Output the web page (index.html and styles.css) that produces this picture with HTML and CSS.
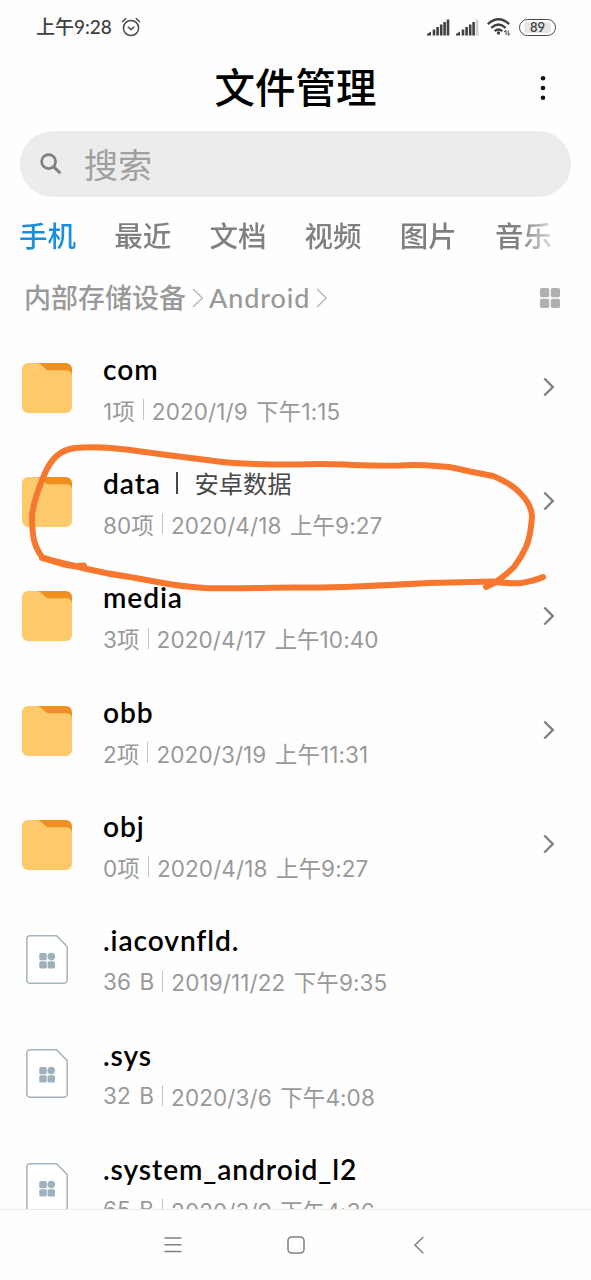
FILE: index.html
```html
<!DOCTYPE html>
<html lang="zh-CN">

<head>
    <meta charset="UTF-8">
    <meta name="viewport" content="width=device-width, initial-scale=1.0">
    <title>文件管理</title>
    <link rel="stylesheet" href="styles.css">
</head>

<body>
    <!-- Shared icons -->
    <svg class="sprite" width="0" height="0">
        <symbol id="folder" viewBox="0 0 50 50">
            <path d="M14 0H44a6 6 0 0 1 6 6V20H20z" fill="#ee8f1f" />
            <path d="M6 0H14c2.500 0 4 .8 5.500 2.200l4 3.500c1.200 1.100 2 1.500 3.500 1.500H43c4 0 7 1.500 7 5.800V44a6 6 0 0 1-6 6H6a6 6 0 0 1-6-6V6a6 6 0 0 1 6-6z" fill="#fec96b" />
        </symbol>
        <symbol id="file" viewBox="0 0 42 49">
            <path d="M3.500.8H30.500L41.200 11.500V45.200a3 3 0 0 1-3 3H3.800a3 3 0 0 1-3-3V3.800a3 3 0 0 1 3-3z" fill="#fff" stroke="#a3b3bc" stroke-width="1.500" />
            <g fill="#9fb1bd">
                <rect x="13.300" y="18" width="7.500" height="7.300" rx="1.500" />
                <circle cx="25.300" cy="21.600" r="3.800" />
                <rect x="13.300" y="26.200" width="7.500" height="7.300" rx="1.500" />
                <rect x="21.600" y="26.200" width="7.400" height="7.300" rx="1.500" />
            </g>
        </symbol>
        <symbol id="chevron" viewBox="0 0 12 20">
            <path d="M1.300 1.500L9.800 10L1.300 18.500" fill="none" stroke="#808080" stroke-width="2.400" />
        </symbol>
        <symbol id="crumb-arrow" viewBox="0 0 12 20">
            <path d="M1 1L10.300 10L1 19" fill="none" stroke="#b4b4b4" stroke-width="1.300" />
        </symbol>
    </svg>

    <div class="screen">
        <div class="status-bar">
            <span class="time">上午9:28</span>
            <svg class="alarm" width="20" height="20" viewBox="0 0 20 20" fill="none" stroke="#484848" stroke-width="1.500">
                <circle cx="10" cy="11" r="7.600" />
                <path d="M6.800 9.800L10 12.500L13.300 9.800M1 5L5.200 1.300M19 5L14.800 1.300" />
            </svg>
            <div class="status-icons">
                <svg width="23" height="17" viewBox="0 0 23 17" fill="#404040">
                    <path d="M0 16.500V15L4 12.500V16.500z" />
                    <rect x="5.700" y="10.500" width="2.600" height="6" />
                    <rect x="9.300" y="8" width="2.600" height="8.500" />
                    <rect x="12.900" y="5.500" width="2.600" height="11" />
                    <rect x="16.300" y="3" width="2.600" height="13.500" />
                    <rect x="19.700" y="0.500" width="2.600" height="16" />
                </svg>
                <svg class="signal2" width="23" height="17" viewBox="0 0 23 17" fill="#404040">
                    <path d="M0 16.500V15L4 12.500V16.500z" />
                    <rect x="5.700" y="10.500" width="2.600" height="6" />
                    <rect x="9.300" y="8" width="2.600" height="8.500" />
                    <rect x="12.900" y="5.500" width="2.600" height="11" />
                    <rect x="16.300" y="3" width="2.600" height="13.500" />
                    <rect x="19.700" y="0.500" width="2.600" height="16" fill="#d0d0d0" />
                </svg>
                <svg class="wifi" width="24" height="18" viewBox="0 0 24 18" fill="none" stroke="#404040" stroke-width="2.300">
                    <path d="M.8 6.200Q11.500-3.600 22.200 6.200M4.300 9.800Q11.500 3.300 18.700 9.800M7.700 13.100Q11.500 9.800 15.300 13.100" />
                    <circle cx="11.500" cy="15" r="1.700" fill="#404040" stroke="none" />
                    <path d="M19 17V12.300L17 14M21.200 12.500V17.300L23.200 15.500" stroke-width="1" />
                </svg>
                <span class="battery"><span class="level">89</span></span>
            </div>
        </div>

        <div class="header">
            <h1>文件管理</h1>
            <svg class="more" width="6" height="26" viewBox="0 0 6 26" fill="#111">
                <circle cx="3" cy="3.200" r="2.300" />
                <circle cx="3" cy="13" r="2.300" />
                <circle cx="3" cy="22.800" r="2.300" />
            </svg>
        </div>

        <div class="search">
            <svg width="22" height="22" viewBox="0 0 22 22" fill="none" stroke="#808080" stroke-width="2.700">
                <circle cx="8.600" cy="8.600" r="7" />
                <path d="M13.600 13.600L20.300 20.300" stroke-width="3" />
            </svg>
            <span>搜索</span>
        </div>

        <div class="tabs">
            <span class="tab active">手机</span>
            <span class="tab">最近</span>
            <span class="tab">文档</span>
            <span class="tab">视频</span>
            <span class="tab">图片</span>
            <span class="tab">音乐</span>
        </div>

        <div class="breadcrumb">
            <span>内部存储设备</span>
            <svg class="arrow" width="12" height="20"><use href="#crumb-arrow" /></svg>
            <span class="current">Android</span>
            <svg class="arrow" width="12" height="20"><use href="#crumb-arrow" /></svg>
            <svg class="grid-view" width="20" height="20" viewBox="0 0 20 20" fill="#b0b0b0">
                <rect width="9.200" height="9.200" rx="1.800" />
                <rect x="10.800" width="9.200" height="9.200" rx="1.800" />
                <rect y="10.800" width="9.200" height="9.200" rx="1.800" />
                <rect x="10.800" y="10.800" width="9.200" height="9.200" rx="1.800" />
            </svg>
        </div>

        <div class="list">
            <div class="row">
                <svg class="icon" width="50" height="50"><use href="#folder" /></svg>
                <div class="info">
                    <div class="name">com</div>
                    <div class="meta"><span>1项</span><i></i><span>2020/1/9 下午1:15</span></div>
                </div>
                <svg class="go" width="12" height="20"><use href="#chevron" /></svg>
            </div>
            <div class="row">
                <svg class="icon" width="50" height="50"><use href="#folder" /></svg>
                <div class="info">
                    <div class="name">data<span class="alias">安卓数据</span></div>
                    <div class="meta"><span>80项</span><i></i><span>2020/4/18 上午9:27</span></div>
                </div>
                <svg class="go" width="12" height="20"><use href="#chevron" /></svg>
            </div>
            <div class="row">
                <svg class="icon" width="50" height="50"><use href="#folder" /></svg>
                <div class="info">
                    <div class="name">media</div>
                    <div class="meta"><span>3项</span><i></i><span>2020/4/17 上午10:40</span></div>
                </div>
                <svg class="go" width="12" height="20"><use href="#chevron" /></svg>
            </div>
            <div class="row">
                <svg class="icon" width="50" height="50"><use href="#folder" /></svg>
                <div class="info">
                    <div class="name">obb</div>
                    <div class="meta"><span>2项</span><i></i><span>2020/3/19 上午11:31</span></div>
                </div>
                <svg class="go" width="12" height="20"><use href="#chevron" /></svg>
            </div>
            <div class="row">
                <svg class="icon" width="50" height="50"><use href="#folder" /></svg>
                <div class="info">
                    <div class="name">obj</div>
                    <div class="meta"><span>0项</span><i></i><span>2020/4/18 上午9:27</span></div>
                </div>
                <svg class="go" width="12" height="20"><use href="#chevron" /></svg>
            </div>
            <div class="row">
                <svg class="icon file" width="42" height="49"><use href="#file" /></svg>
                <div class="info">
                    <div class="name">.iacovnfld.</div>
                    <div class="meta"><span>36 B</span><i></i><span>2019/11/22 下午9:35</span></div>
                </div>
            </div>
            <div class="row">
                <svg class="icon file" width="42" height="49"><use href="#file" /></svg>
                <div class="info">
                    <div class="name">.sys</div>
                    <div class="meta"><span>32 B</span><i></i><span>2020/3/6 下午4:08</span></div>
                </div>
            </div>
            <div class="row">
                <svg class="icon file" width="42" height="49"><use href="#file" /></svg>
                <div class="info">
                    <div class="name">.system_android_l2</div>
                    <div class="meta"><span>65 B</span><i></i><span>2020/3/9 下午4:36</span></div>
                </div>
            </div>
        </div>

        <div class="nav-bar">
            <svg width="18" height="18" viewBox="0 0 18 18"><path d="M.5 2H17.500M.5 8.700H17.500M.5 15.400H17.500" /></svg>
            <svg width="18" height="18" viewBox="0 0 18 18"><rect x="1" y="1" width="16" height="16" rx="3.500" /></svg>
            <svg width="18" height="18" viewBox="0 0 18 18"><path d="M13.300 1L5 9L13.300 17.200" /></svg>
        </div>

        <!-- Hand-drawn circle around the data folder -->
        <svg class="marker" width="591" height="180" viewBox="0 430 591 180">
            <path d="M84 565.500Q73 567 62 564Q52 561 42 557C34 546 32 537 32 515C34 498 40 485 45 473C52 458 60 450 75 448C95 446 112 448 130 450L167 455L207 460Q220 462 233 463C255 464.500 280 464.500 296 464.500Q320 463.500 345 464.500Q363 466 400 465.500C415 464 435 466 449 467Q460 469 470 471.500L493 476C505 481 514 486 520 493C527 500 532 508 532 517C531 530 530 538 526 547Q521 558 514 567Q507 574 496 582Q491 585 486 587" />
            <path d="M42 558Q62 563 87 569Q108 574 130 577L163 583C178 586 190 587 205 588C235 589 265 587.500 296 587.500Q330 587.800 356 586.500Q392 585 429 583L493 581.500Q509 584 521 583Q534 581 543 577" />
        </svg>
    </div>
</body>

</html>
```
FILE: styles.css
```css
body {
    margin: 0;
    background-color: #fdfdfd;
    font-family: Lato, "Noto Sans CJK SC", sans-serif;
}

.sprite {
    position: absolute;
}

.screen {
    position: relative;
    display: flex;
    flex-direction: column;
    width: 591px;
    height: 1280px;
    overflow: hidden;
    background-color: #fefefe;
}

svg {
    display: block;
    flex-shrink: 0;
}

/* Status bar */
.status-bar {
    display: flex;
    align-items: center;
    height: 54px;
    padding: 0 35px 0 36px;
    color: #404040;
    box-sizing: border-box;
}

.time {
    font-size: 19px;
    font-weight: 500;
    line-height: 20px;
}

.alarm {
    margin-left: 9px;
}

.status-icons {
    display: flex;
    align-items: center;
    margin-left: auto;
}

.signal2 {
    margin-left: 6px;
}

.wifi {
    margin: 0 8px;
}

.battery {
    width: 37px;
    height: 17px;
    padding: 2px;
    border: 1.5px solid #484848;
    border-radius: 9px;
    box-sizing: border-box;
}

.level {
    display: block;
    width: 27px;
    height: 11px;
    margin: 0 auto;
    border-radius: 3px;
    background-color: #e6e6e6;
    font-size: 13px;
    font-weight: 600;
    line-height: 11px;
    text-align: center;
}

/* Title */
.header {
    display: flex;
    align-items: center;
    height: 68px;
    padding: 0 45px 2px 51px;
}

.header h1 {
    flex: 1;
    margin: 0;
    font-size: 40.5px;
    font-weight: 500;
    line-height: 68px;
    text-align: center;
    color: #000;
}

.search {
    display: flex;
    align-items: center;
    gap: 22px;
    height: 66px;
    margin: 7px 20px 0;
    padding-left: 20px;
    border-radius: 33px;
    background-color: #ececec;
    color: #a0a0a0;
    font-size: 34px;
    line-height: 66px;
}

.search span {
    padding-top: 2px;
}

/* Category tabs */
.tabs {
    display: flex;
    gap: 38.2px;
    width: 533px;
    height: 78px;
    margin-left: 19px;
    overflow: hidden;
    font-size: 28.5px;
    font-weight: 500;
    line-height: 78px;
    white-space: nowrap;
    color: #808080;
    -webkit-mask-image: linear-gradient(to right, #000 500px, transparent 545px);
    mask-image: linear-gradient(to right, #000 500px, transparent 545px);
}

.tab {
    flex-shrink: 0;
}

.tab.active {
    color: #1890dc;
}

.breadcrumb {
    display: flex;
    align-items: center;
    height: 55px;
    padding: 0 31px 9px 24px;
    box-sizing: border-box;
    font-size: 27px;
    font-weight: 500;
    line-height: 46px;
    color: #999;
}

.breadcrumb .arrow {
    margin-left: 6px;
}

.current {
    margin-left: 5px;
    letter-spacing: 0.9px;
}

.grid-view {
    margin-left: auto;
}

/* File list */
.list {
    flex: 1;
    min-height: 0;
    overflow: hidden;
}

.row {
    display: flex;
    align-items: center;
    height: 114.33px;
    padding: 0 36px 0 22px;
}

.icon {
    padding-top: 1px;
}

.icon.file {
    margin: 0 4px;
}

.info {
    flex: 1;
    margin-left: 31px;
    padding-top: 4px;
}

.name {
    display: flex;
    align-items: center;
    height: 41px;
    font-size: 28.2px;
    font-weight: 600;
    letter-spacing: 0.9px;
    white-space: nowrap;
    color: #000;
}

.alias {
    display: flex;
    align-items: center;
    margin-left: 15px;
    font-size: 24.3px;
    font-weight: 400;
    letter-spacing: 0;
    color: #484848;
}

.alias::before {
    content: "";
    width: 2.5px;
    height: 22px;
    margin-right: 16px;
    background-color: #484848;
}

.meta {
    display: flex;
    align-items: center;
    height: 41px;
    font-family: Inter, "Noto Sans CJK SC", sans-serif;
    font-size: 22.5px;
    font-weight: 400;
    letter-spacing: 0.1px;
    word-spacing: 2px;
    white-space: nowrap;
    color: #999;
}

.meta i {
    width: 1px;
    height: 21px;
    margin: 0 8px;
    background-color: #c4c4c4;
}

/* System navigation */
.nav-bar {
    display: flex;
    align-items: center;
    justify-content: center;
    gap: 105px;
    height: 70px;
    border-top: 1px solid #eaeaea;
    fill: none;
    stroke: #808080;
    stroke-width: 1.5px;
}

.marker {
    position: absolute;
    top: 430px;
    left: 0;
    fill: none;
    stroke: #f7772f;
    stroke-width: 6px;
    stroke-linecap: round;
    stroke-linejoin: round;
}
```
